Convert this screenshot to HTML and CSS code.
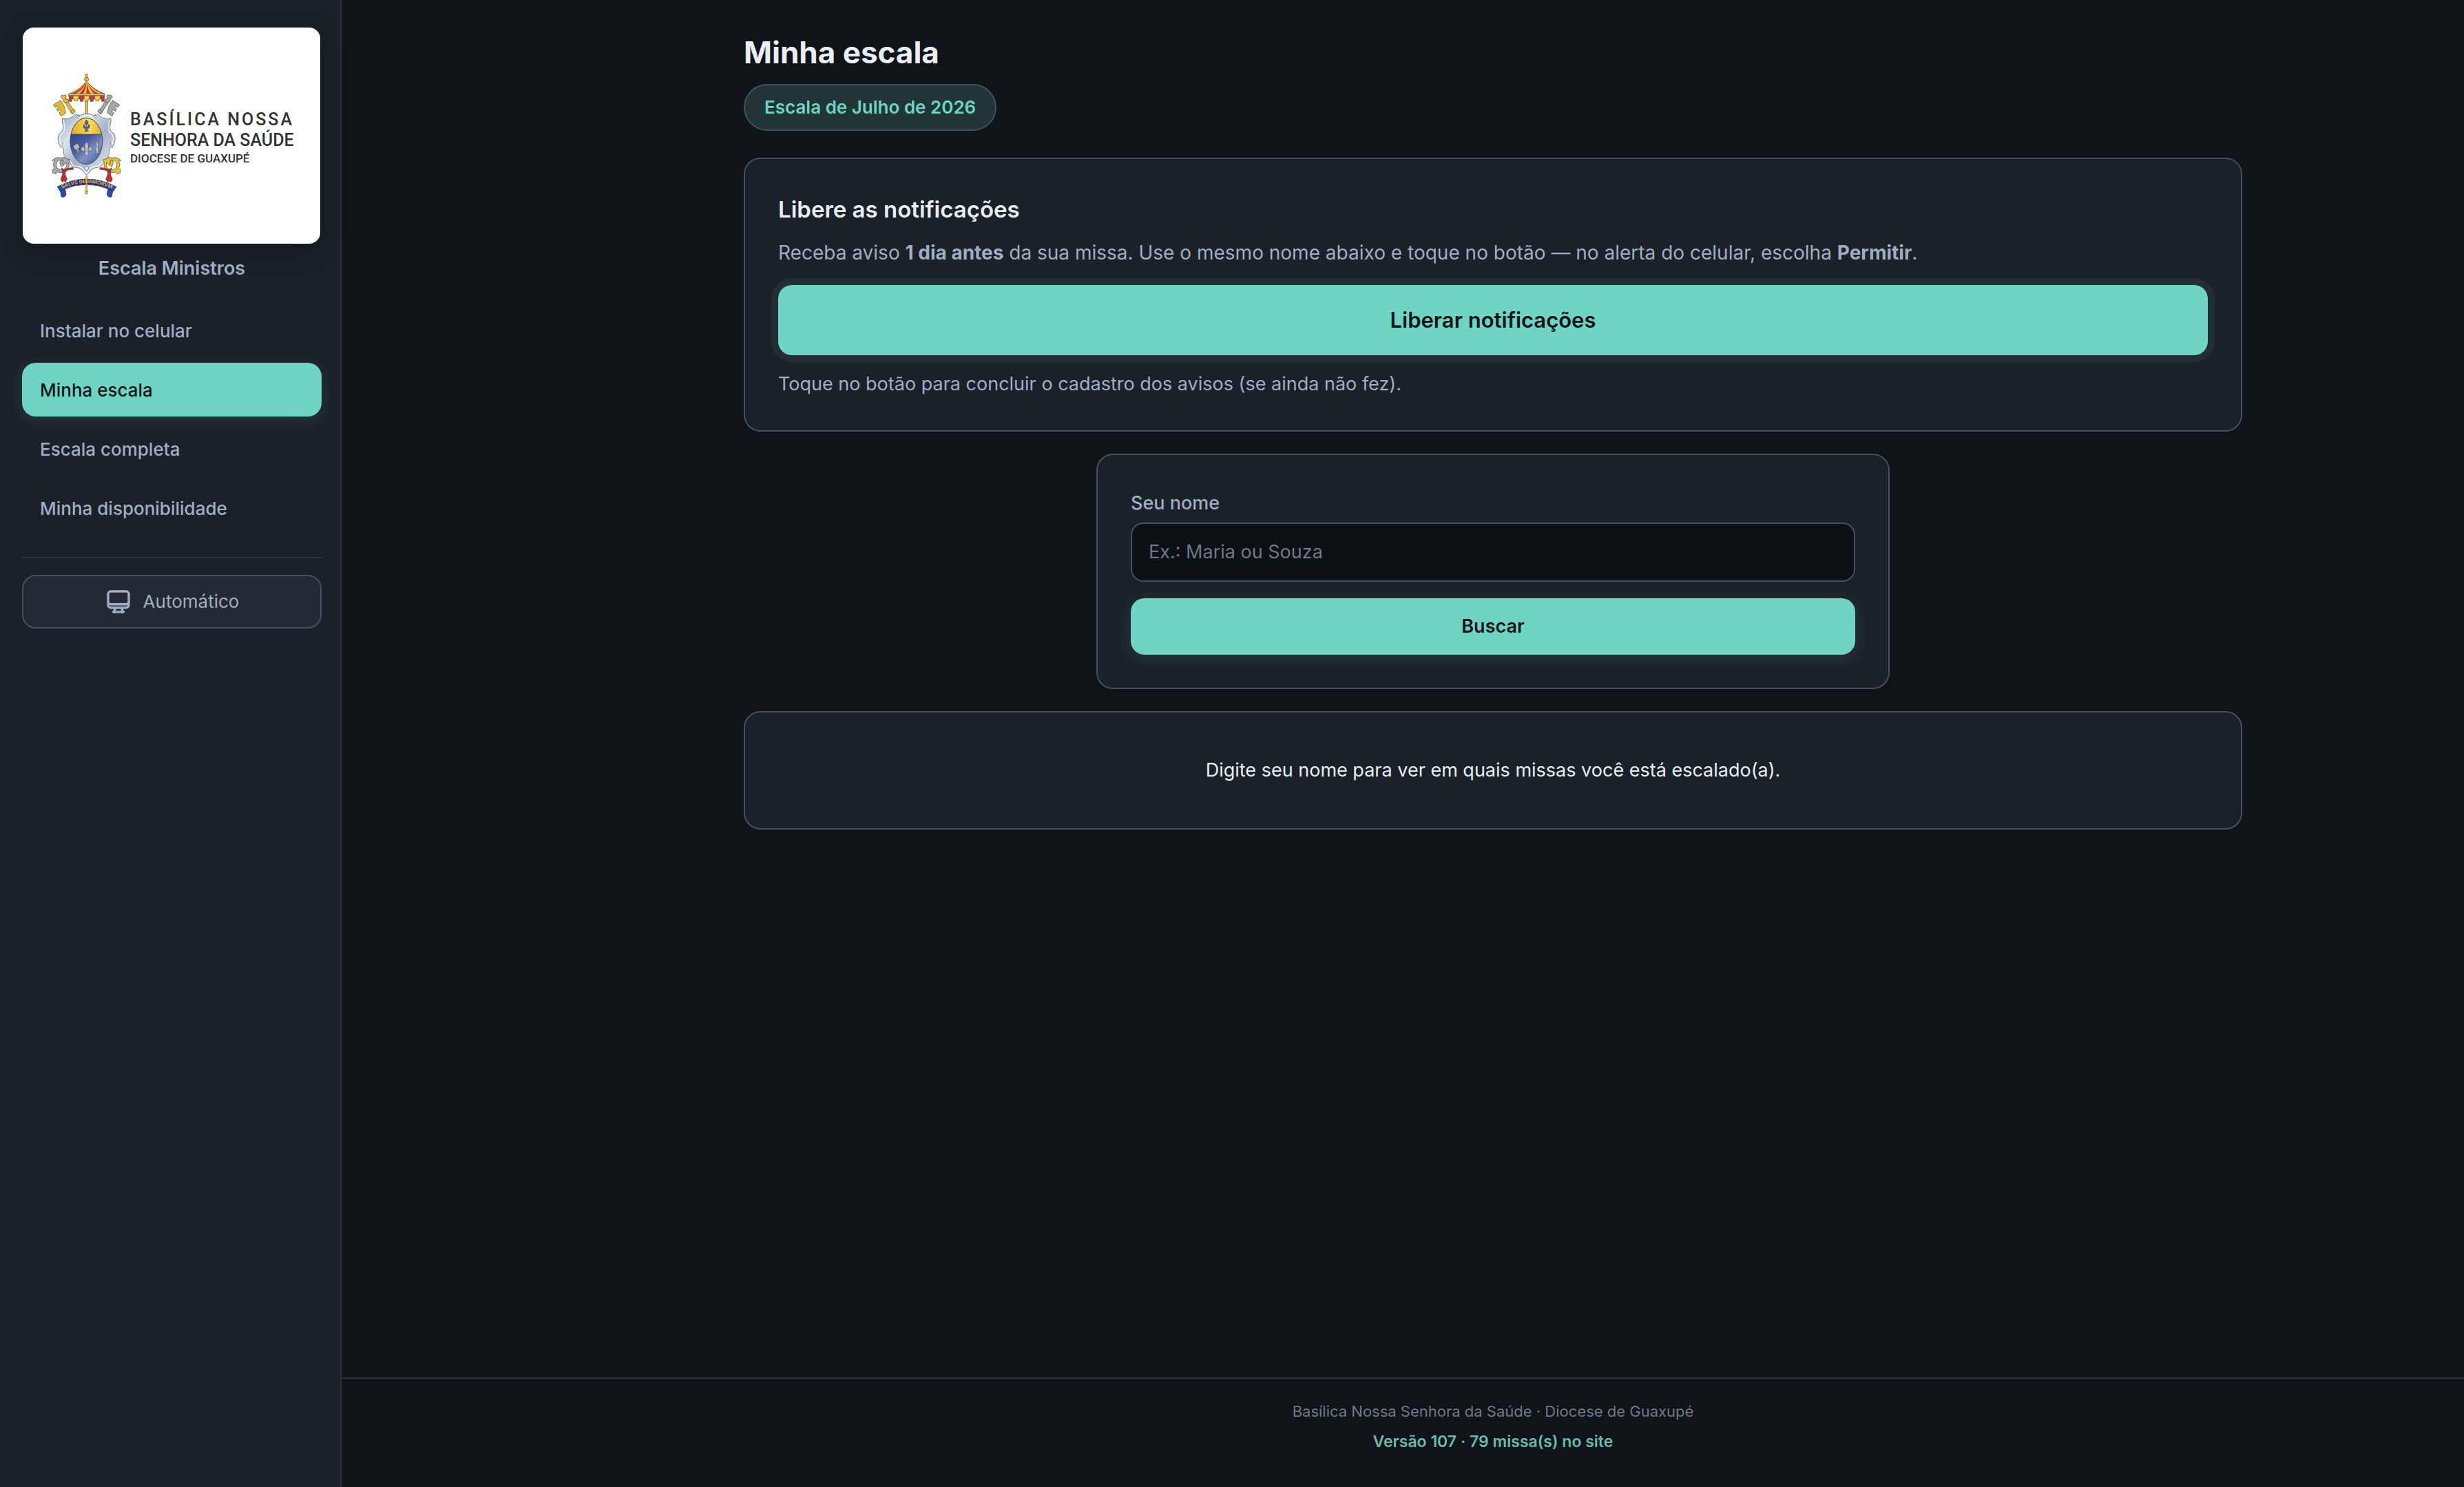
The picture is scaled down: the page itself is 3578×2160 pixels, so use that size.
FILE: index.html
```
<!DOCTYPE html>
<html lang="pt-BR">
<head>
    <meta charset="UTF-8">
    <meta name="viewport" content="width=device-width, initial-scale=1">
    <title>Minha escala</title>
    <link rel="stylesheet" href="styles.css">
</head>
<body>
    <aside class="sidebar">
        <div class="brand">
            <svg class="brand-logo" viewBox="33 40 432 314" role="img" aria-label="Basílica Nossa Senhora da Saúde">
                <defs>
                    <linearGradient id="prata" x1="0" y1="0" x2="1" y2="1">
                        <stop offset="0" stop-color="#8fa0b8"/>
                        <stop offset=".3" stop-color="#dbe3ed"/>
                        <stop offset=".55" stop-color="#a3b2c6"/>
                        <stop offset=".8" stop-color="#cfd8e4"/>
                        <stop offset="1" stop-color="#8d9db3"/>
                    </linearGradient>
                    <linearGradient id="azul" x1="0" y1="0" x2="1" y2="1">
                        <stop offset="0" stop-color="#2f4488"/>
                        <stop offset=".35" stop-color="#465ba0"/>
                        <stop offset=".6" stop-color="#8090c4"/>
                        <stop offset="1" stop-color="#34488f"/>
                    </linearGradient>
                    <linearGradient id="ouro" x1="0" y1="0" x2="1" y2="0">
                        <stop offset="0" stop-color="#d9a91f"/>
                        <stop offset=".6" stop-color="#fbdc58"/>
                        <stop offset="1" stop-color="#d8a91c"/>
                    </linearGradient>
                    <linearGradient id="fita" x1="0" y1="0" x2="1" y2="0">
                        <stop offset="0" stop-color="#3550c8"/>
                        <stop offset=".3" stop-color="#1c2a78"/>
                        <stop offset=".7" stop-color="#1c2a78"/>
                        <stop offset="1" stop-color="#3550c8"/>
                    </linearGradient>
                    <clipPath id="oval"><ellipse cx="196" cy="345" rx="70" ry="101"/></clipPath>
                    <path id="lema" d="M92 552Q197 504 305 552"/>
                    <g id="chave">
                        <path d="M92 160L104 153L146 218L134 227Z"/>
                        <path d="M84 154L90 144L97 146L104 143L110 150L104 155L108 162L118 164L118 174L104 178L94 172L95 164Z"/>
                        <path d="M128 216L142 205L148 215L136 226Z"/>
                        <path d="M84 167L53 187L61 198L70 192L75 199L66 205L72 215L82 208L87 215L78 222L86 236L106 222L101 196Z"/>
                    </g>
                    <g id="argola">
                        <path d="M47 430Q62 412 84 418Q100 412 112 422L126 426Q118 434 121 450Q120 474 100 481L80 482Q64 476 64 488L50 484L50 468L58 464Q46 446 58 430Z"/>
                        <path class="vazado" d="M68 436Q78 424 90 428Q84 440 94 448Q104 446 110 438Q114 460 98 468Q80 474 68 462Q62 448 68 436Z"/>
                        <path d="M84 426Q76 444 88 456L98 450Q90 440 94 430Z"/>
                    </g>
                    <g id="borla">
                        <path d="M86 462Q100 472 112 464L138 460L140 468L112 472Q100 478 92 474Z"/>
                        <path d="M92 474L104 474L105 492L113 512L108 518L104 524L98 518L92 524L84 512L92 492Z"/>
                    </g>
                </defs>

                <g transform="translate(60 90) scale(.3333)" stroke="#4a4634" stroke-width="2" stroke-linejoin="round">
                    <!-- umbráculo -->
                    <rect x="192" y="165" width="10" height="70" fill="url(#ouro)"/>
                    <path d="M197 82Q176 116 118 140L277 140Q218 116 197 82Z" fill="#f2cb42"/>
                    <g fill="#d23236" stroke="none">
                        <path d="M196 86Q172 122 130 138L150 138Q182 122 196 86Z"/>
                        <path d="M196 88Q184 124 166 138L182 138Q194 122 196 88Z"/>
                        <path d="M197 88Q198 124 196 138L214 138Q204 122 197 88Z"/>
                        <path d="M198 86Q214 124 230 138L250 138Q214 122 198 86Z"/>
                        <path d="M198 84Q226 124 264 138L272 138Q226 118 198 84Z"/>
                    </g>
                    <path d="M117 139L278 139L276 147L119 147Z" fill="#f2cb42"/>
                    <g fill="#d23236">
                        <path d="M120 147H138V162H132V172H121Z"/>
                        <path d="M163 147H186V162H182V172H169V162H163Z"/>
                        <path d="M209 147H232V162H226V172H213V162H209Z"/>
                        <path d="M257 147H275L273 172H263V162H257Z"/>
                    </g>
                    <g fill="#f6cf45">
                        <path d="M138 147H163V162H157V170H143V162H138Z"/>
                        <path d="M186 147H209V162H204V172H190V162H186Z"/>
                        <path d="M232 147H257V162H251V170H237V162H232Z"/>
                    </g>
                    <path d="M191 67H203L207 78L202 82H192L187 78Z" fill="#e3b52a"/>
                    <circle cx="197" cy="58" r="6" fill="#f2cb42"/>

                    <!-- chaves -->
                    <use href="#chave" fill="#e6b930"/>
                    <g transform="translate(394 0) scale(-1 1)"><use href="#chave" fill="#a5a6aa"/></g>

                    <!-- escudo -->
                    <path fill="url(#prata)" stroke="#56606f" d="M148 226Q160 238 178 228Q197 220 216 228Q234 238 246 226Q254 238 270 244Q288 252 303 245Q306 262 300 274Q296 290 304 304Q322 310 322 334Q322 352 310 372Q296 370 297 384Q299 400 288 420Q272 426 270 440Q262 462 232 462Q214 470 208 482L197 494L186 482Q180 470 162 462Q132 462 124 440Q120 426 106 420Q94 400 97 384Q98 370 84 372Q72 352 72 334Q74 310 90 304Q98 290 94 274Q88 262 91 245Q106 252 124 244Q140 238 148 226Z"/>
                    <path fill="none" stroke="#f4f7fa" stroke-width="4" d="M150 236Q166 246 182 236Q197 230 212 236Q228 246 244 236M96 252Q104 276 98 304Q80 314 80 334Q80 350 88 362M298 252Q290 276 296 304Q314 314 314 334Q314 350 306 362M108 424Q126 428 132 444Q144 458 166 456Q184 462 190 478L197 486L204 478Q210 462 228 456Q250 458 262 444Q268 428 286 424"/>
                    <path fill="none" stroke="#56606f" d="M150 238Q158 246 168 236Q162 226 154 232M244 238Q236 246 226 236Q232 226 240 232M88 366Q98 360 92 350M306 366Q296 360 302 350"/>
                    <circle cx="197" cy="463" r="9" fill="#dfe6ee" stroke="#56606f"/>
                    <g clip-path="url(#oval)" stroke="none">
                        <rect x="120" y="240" width="152" height="76" fill="url(#ouro)"/>
                        <rect x="120" y="315" width="152" height="135" fill="url(#azul)"/>
                        <path d="M120 315H272" stroke="#3a3a44" stroke-width="2"/>
                    </g>
                    <ellipse cx="196" cy="345" rx="70" ry="101" fill="none" stroke="#3f4450" stroke-width="3"/>

                    <!-- fonte -->
                    <g fill="#52679a" stroke="#2e3a58">
                        <path d="M194 254H200V262H204V268H200V276H194V268H190V262H194Z"/>
                        <path d="M184 274H189V282H205V274H210V286Q204 292 200 292V298L206 302H188L194 298V292Q188 292 184 286Z"/>
                    </g>
                    <!-- rosa, flor-de-lis e vaso -->
                    <g fill="#b9bcc3" stroke="#454a5a">
                        <path d="M138 362L146 364L149 354L155 360L163 352L162 364L168 368L163 377L157 381L169 383L160 389L168 402L164 404L153 383Q142 380 138 362Z"/>
                        <path d="M197 347Q212 366 202 380H206Q206 366 216 370Q226 380 215 388Q208 388 206 386H203Q204 396 208 400L197 411L187 400Q191 396 192 386H188Q186 390 178 388Q168 380 178 370Q188 366 188 380H192Q182 366 197 347Z"/>
                        <path d="M238 346H248L246 354L249 360L246 368Q254 380 247 390L251 398H235L239 390Q232 380 240 368L237 360L240 354Z"/>
                    </g>

                    <!-- argolas e borlas -->
                    <use href="#argola" fill="#a9a9ab"/>
                    <g transform="translate(394 0) scale(-1 1)"><use href="#argola" fill="#e9bf3a"/></g>
                    <use href="#borla" fill="#c9292e"/>
                    <g transform="translate(394 0) scale(-1 1)"><use href="#borla" fill="#c9292e"/></g>

                    <!-- faixa -->
                    <g stroke="#1a2558">
                        <path fill="#2c46b4" d="M80 552Q92 548 104 556L108 578Q104 590 92 589Q82 586 86 578Z"/>
                        <path fill="#2c46b4" d="M314 552Q302 548 290 556L286 578Q290 590 302 589Q312 586 308 578Z"/>
                        <path fill="url(#fita)" d="M69 544Q197 476 327 544L314 563L298 556Q197 512 96 556L82 563Z"/>
                    </g>
                    <path d="M194 497H200V565H194Z" fill="#e3b52a" stroke-width="1"/>
                    <text class="lema"><textPath href="#lema" startOffset="50%">SALVS INFIRMORVM</textPath></text>
                    <circle cx="197" cy="569" r="6" fill="#f2cb42"/>
                </g>

                <text class="brand-line tracked" x="189" y="182">BASÍLICA NOSSA</text>
                <text class="brand-line" x="189" y="212">SENHORA DA SAÚDE</text>
                <text class="brand-line small" x="189" y="236">DIOCESE DE GUAXUPÉ</text>
            </svg>
        </div>
        <p class="brand-name">Escala Ministros</p>

        <nav class="nav">
            <a class="nav-link" href="#instalar">Instalar no celular</a>
            <a class="nav-link active" href="#minha-escala" aria-current="page">Minha escala</a>
            <a class="nav-link" href="#escala-completa">Escala completa</a>
            <a class="nav-link" href="#disponibilidade">Minha disponibilidade</a>
        </nav>

        <div class="theme">
            <button class="theme-btn" type="button">
                <svg class="theme-icon" viewBox="0 0 24 24" aria-hidden="true">
                    <path d="M9 17.25v1.007a3 3 0 0 1-.879 2.122L7.5 21h9l-.621-.621A3 3 0 0 1 15 18.257V17.25m6-12V15a2.25 2.25 0 0 1-2.25 2.25H5.25A2.25 2.25 0 0 1 3 15V5.25m18 0A2.25 2.25 0 0 0 18.75 3H5.25A2.25 2.25 0 0 0 3 5.25m18 0V12a2.25 2.25 0 0 1-2.25 2.25H5.25A2.25 2.25 0 0 1 3 12V5.25"/>
                </svg>
                Automático
            </button>
        </div>
    </aside>

    <div class="page">
        <main class="content">
            <header class="head">
                <h1 class="title">Minha escala</h1>
                <span class="badge">Escala de Julho de 2026</span>
            </header>

            <section class="card notify">
                <h2 class="card-title">Libere as notificações</h2>
                <p class="text lead">Receba aviso <strong>1 dia antes</strong> da sua missa. Use o mesmo nome abaixo e toque no botão — no alerta do celular, escolha <strong>Permitir</strong>.</p>
                <button class="btn btn-large" type="button">Liberar notificações</button>
                <p class="text">Toque no botão para concluir o cadastro dos avisos (se ainda não fez).</p>
            </section>

            <form class="card search">
                <label class="label" for="nome">Seu nome</label>
                <input class="input" id="nome" type="text" placeholder="Ex.: Maria ou Souza">
                <button class="btn" type="submit">Buscar</button>
            </form>

            <section class="card empty">
                <p>Digite seu nome para ver em quais missas você está escalado(a).</p>
            </section>
        </main>

        <footer class="footer">
            <p>Basílica Nossa Senhora da Saúde · Diocese de Guaxupé</p>
            <p class="version">Versão 107 · 79 missa(s) no site</p>
        </footer>
    </div>
</body>
</html>
```

FILE: styles.css
```
:root {
    --bg: #101317;
    --surface: #1b2129;
    --surface-2: #242a35;
    --line: #2b3443;
    --border: #434f63;
    --text: #e9edf4;
    --muted: #a0aec4;
    --dim: #6d7989;
    --accent: #6fd4c3;
}

* {
    box-sizing: border-box;
}

body {
    display: flex;
    min-height: 100vh;
    margin: 0;
    background: var(--bg);
    color: var(--text);
    font-family: Inter, "Liberation Sans", sans-serif;
    font-size: 27px;
    line-height: 44px;
}

h1, h2, p {
    margin: 0;
}

button, input {
    font: inherit;
}

/* menu lateral */
.sidebar {
    flex: none;
    width: 496px;
    padding: 40px 27px 40px 32px;
    background: var(--surface);
    border-right: 2px solid var(--line);
}

.brand {
    margin: 0 2px 0 1px;
    overflow: hidden;
    border-radius: 16px;
    background: #fff;
    box-shadow: 0 8px 32px rgba(0, 0, 0, .25);
}

.brand-logo {
    display: block;
    width: 100%;
}

.brand-line {
    fill: #333;
    font-family: Roboto, sans-serif;
    font-size: 25px;
    font-weight: 500;
}

.brand-line.tracked {
    letter-spacing: 3px;
}

.brand-line.small {
    font-size: 17px;
}

.vazado {
    fill: #fff;
}

.lema {
    fill: #d9b23c;
    stroke: none;
    font-family: Inter, sans-serif;
    font-size: 22px;
    font-weight: 700;
    text-anchor: middle;
}

.brand-name {
    margin-top: 18px;
    color: var(--muted);
    font-size: 27px;
    font-weight: 600;
    line-height: 36px;
    text-align: center;
}

.nav {
    display: flex;
    flex-direction: column;
    gap: 8px;
    margin-top: 33px;
}

.nav-link {
    padding: 21px 26px 19px;
    border-radius: 20px;
    color: var(--muted);
    font-size: 26px;
    font-weight: 500;
    line-height: 38px;
    text-decoration: none;
}

.nav-link.active {
    background: var(--accent);
    color: #0f1419;
    box-shadow: 0 4px 20px rgba(112, 213, 196, .15);
}

.theme {
    margin-top: 32px;
    padding-top: 24px;
    border-top: 2px solid var(--line);
}

.theme-btn {
    display: flex;
    align-items: center;
    justify-content: center;
    gap: 16px;
    width: 100%;
    padding: 17px 24px;
    border: 2px solid var(--border);
    border-radius: 20px;
    background: var(--surface-2);
    color: var(--muted);
    font-size: 26px;
    line-height: 38px;
}

.theme-icon {
    width: 40px;
    height: 40px;
    fill: none;
    stroke: currentColor;
    stroke-width: 2;
    stroke-linecap: round;
    stroke-linejoin: round;
}

/* conteúdo */
.page {
    display: flex;
    flex: 1;
    flex-direction: column;
    min-width: 0;
}

.content {
    display: flex;
    flex: 1;
    flex-direction: column;
    gap: 32px;
    width: 100%;
    padding: 46px 0 64px 262px;
}

.content > * {
    width: 100%;
    max-width: 2176px;
    margin: 0 auto;
}

.head {
    display: flex;
    flex-direction: column;
    align-items: flex-start;
    gap: 16px;
    padding-bottom: 7px;
}

.title {
    font-size: 44px;
    font-weight: 700;
    line-height: 60px;
}

.badge {
    padding: 12px 28px;
    border: 2px solid var(--border);
    border-radius: 34px;
    background: #213537;
    color: var(--accent);
    font-size: 26px;
    font-weight: 600;
    line-height: 40px;
}

.card {
    display: flex;
    flex-direction: column;
    padding: 48px;
    border: 2px solid var(--border);
    border-radius: 24px;
    background: var(--surface);
}

.card-title {
    margin-bottom: 16px;
    font-size: 33px;
    font-weight: 600;
    line-height: 50px;
}

.text {
    color: var(--muted);
}

.text.lead {
    font-size: 28px;
}

.text strong {
    font-weight: 700;
}

.btn {
    padding: 19px 32px;
    border: 0;
    border-radius: 20px;
    background: var(--accent);
    color: #0f1419;
    font-weight: 600;
    box-shadow: 0 4px 24px rgba(112, 213, 196, .15);
}

.btn-large {
    margin: 25px 0 20px;
    padding: 29px 32px;
    font-size: 31px;
    box-shadow: 0 0 0 10px rgba(112, 213, 196, .08);
}

.notify {
    padding-bottom: 45px;
}

.content > .search {
    max-width: 1152px;
}

.label {
    margin-bottom: 6px;
    color: var(--muted);
    font-weight: 500;
}

.input {
    width: 100%;
    margin-bottom: 24px;
    padding: 19px 24px;
    border: 2px solid var(--border);
    border-radius: 18px;
    background: #0d1015;
    color: var(--text);
}

.input::placeholder {
    color: var(--dim);
    opacity: 1;
}

.empty {
    padding: 62px 48px;
    text-align: center;
}

.footer {
    padding: 29px 0 48px 262px;
    border-top: 2px solid var(--line);
    color: var(--dim);
    font-size: 22px;
    line-height: 36px;
    text-align: center;
}

.version {
    margin-top: 8px;
    color: #62bdaf;
    font-size: 23px;
    font-weight: 600;
}
```
